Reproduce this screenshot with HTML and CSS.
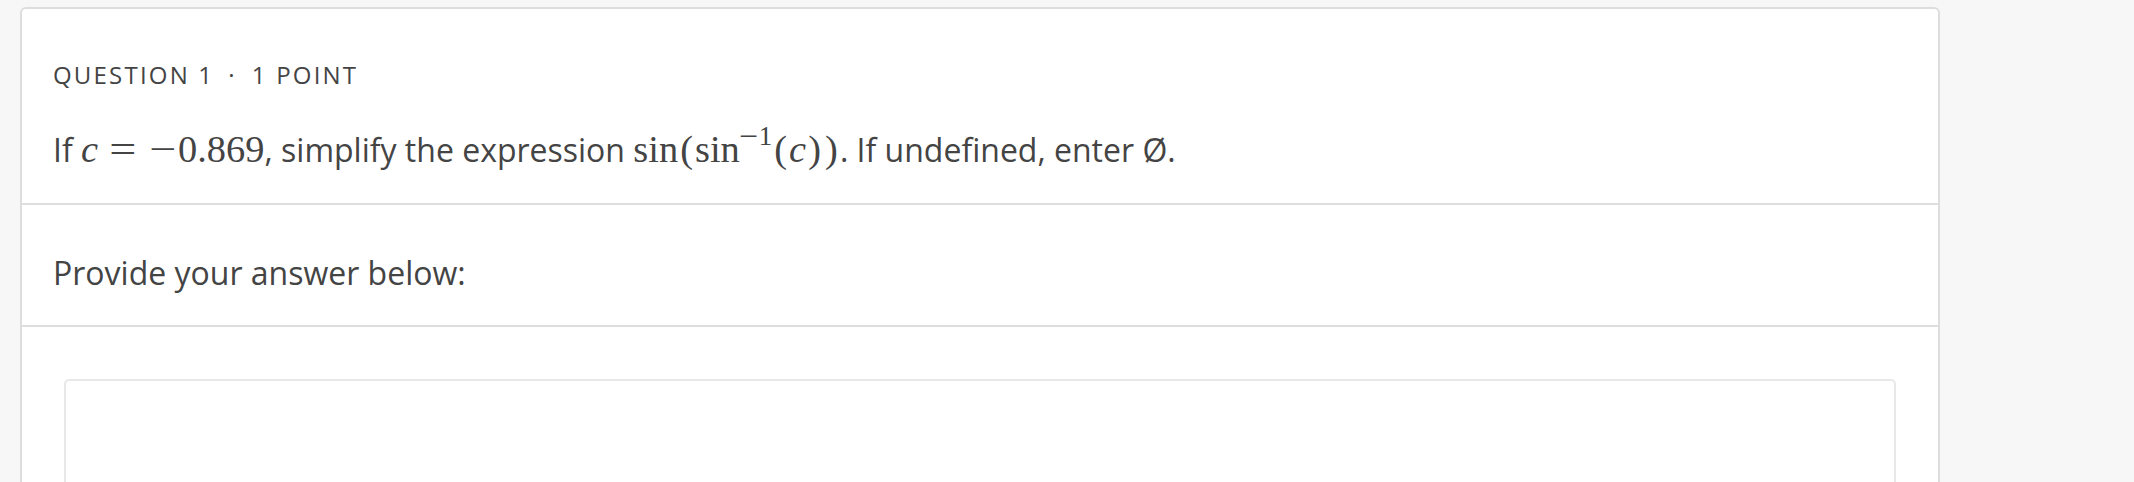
FILE: index.html
```html
<!DOCTYPE html>
<html lang="en">
<head>
<meta charset="utf-8">
<title>Question 1</title>
<link rel="stylesheet" href="styles.css">
</head>
<body>
<div class="page">
  <div class="card">
    <section class="sec sec-q">
      <div class="meta"><span>QUESTION 1</span><span class="sep">·</span><span>1 POINT</span></div>
      <p class="prompt">If <span class="m"><span class="mi">c</span><span class="rel"><span class="wide">=</span></span><span class="op"><span class="wide">−</span></span>0.869</span>, simplify the expression <span class="m">sin<span class="par">(</span>sin<span class="sup"><span class="smin">−</span>1</span><span class="par">(</span><span class="mi">c</span><span class="par">)</span><span class="par">)</span></span>. If undefined, enter Ø.</p>
    </section>
    <section class="sec sec-p">
      <p class="prompt">Provide your answer below:</p>
    </section>
    <section class="sec sec-a">
      <div class="answer"></div>
    </section>
  </div>
</div>
</body>
</html>
```
FILE: styles.css
```css
body {
  margin: 0;
  background: #f7f7f7;
  font-family: "Open Sans", "Liberation Sans", sans-serif;
  color: #444444;
}

.page {
  padding: 7px 0 0 20px;
}

.card {
  width: 1920px;
  box-sizing: border-box;
  background: #ffffff;
  border: 2px solid #dddddd;
  border-radius: 6px;
}

.sec {
  padding-left: 31px;
  padding-right: 31px;
  border-bottom: 2px solid #dddddd;
}

.sec-q {
  padding-top: 48px;
  padding-bottom: 29px;
}

.meta {
  font-size: 24px;
  line-height: 36px;
  font-weight: 500;
  letter-spacing: 2.2px;
  color: #444444;
  margin-bottom: 33px;
}

.sep {
  margin: 0 15px 0 14px;
}

.prompt {
  margin: 0;
  font-size: 32px;
  line-height: 48px;
}

.m {
  font-family: "Liberation Serif", "Times New Roman", serif;
  font-size: 38.4px;
  line-height: 1;
}

.mi {
  font-style: italic;
}

.rel {
  display: inline-block;
  width: 0.778em;
  margin: 0 0.278em 0 0.25em;
  text-align: center;
}

.op {
  display: inline-block;
  width: 0.778em;
  text-align: center;
}

.wide {
  display: inline-block;
  transform: scaleX(1.25);
}

.par {
  display: inline-block;
  width: 0.44em;
  text-align: center;
}

.sup {
  font-size: 0.7em;
  line-height: 0;
  vertical-align: 17px;
}

.smin {
  display: inline-block;
  margin: 0 0.08em 0 0.06em;
  transform: scaleX(1.25);
}

.sec-p {
  padding-top: 44px;
  padding-bottom: 28px;
}

.sec-a {
  padding: 52px 42px 40px;
  border-bottom: none;
}

.answer {
  height: 240px;
  border: 2px solid #e8e8e8;
  border-radius: 5px;
  background: #ffffff;
}
```
